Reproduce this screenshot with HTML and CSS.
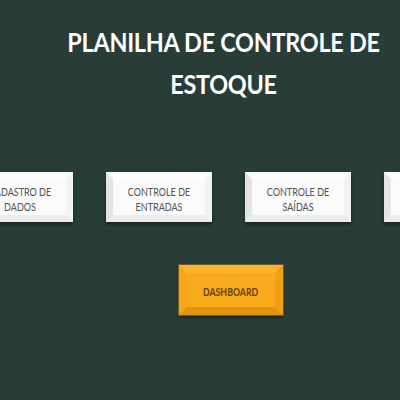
FILE: index.html
```html
<!DOCTYPE html>
<html lang="pt-BR">
<head>
<meta charset="utf-8">
<title>Planilha de Controle de Estoque</title>
<link rel="stylesheet" href="styles.css">
</head>
<body>
<main class="page">
  <h1 class="title"><span class="title-text">PLANILHA DE CONTROLE DE<br>ESTOQUE</span></h1>
  <nav class="menu">
    <a class="btn"><span class="label">CADASTRO DE<br>DADOS</span></a>
    <a class="btn"><span class="label">CONTROLE DE<br>ENTRADAS</span></a>
    <a class="btn"><span class="label">CONTROLE DE<br>SAÍDAS</span></a>
    <a class="btn"><span class="label">RELATÓRIO<br>GERAL</span></a>
  </nav>
  <div class="dash-row">
    <a class="btn btn-dash"><span class="label">DASHBOARD</span></a>
  </div>
</main>
</body>
</html>
```
FILE: styles.css
```css
html, body {
  margin: 0;
  padding: 0;
  background: #283c38;
  overflow: hidden;
}
.page {
  width: 400px;
  height: 400px;
  font-family: Lato, "Open Sans", sans-serif;
}
.title {
  margin: 0;
  padding-top: 21px;
  padding-left: 46px;
  font-size: 26px;
  line-height: 42px;
  font-weight: 700;
  color: #ffffff;
  text-align: center;
  letter-spacing: -0.3px;
}
.title-text {
  display: inline-block;
  transform: scaleX(0.9);
}
.menu {
  display: flex;
  gap: 33px;
  margin-top: 67px;
  margin-left: -33px;
}
.btn {
  box-sizing: border-box;
  flex: none;
  width: 106px;
  height: 50px;
  display: flex;
  align-items: center;
  justify-content: center;
  text-align: center;
  font-size: 11px;
  line-height: 15px;
  color: #4f5552;
  background: #fbfbfb;
  border-style: solid;
  border-width: 7px;
  border-color: #fdfdfd #f3f3f3 #ececec #e4e4e4;
  box-shadow: 0 2px 3px rgba(0, 0, 0, 0.45);
}
.label {
  display: inline-block;
  transform: scaleX(0.82);
  padding-top: 3px;
  white-space: nowrap;
}
.dash-row {
  margin-top: 43px;
  margin-left: 179px;
}
.btn-dash {
  width: 104px;
  height: 50px;
  color: #5e440a;
  font-size: 11px;
  font-weight: 700;
  background: #f9a91c;
  border-width: 8px;
  border-color: #fbb42e #f0a015 #e3940f #f6a51d;
  outline: 1px solid #6e5a22;
  box-shadow: 0 2px 3px rgba(0, 0, 0, 0.5);
}
.btn-dash .label {
  transform: scaleX(0.8);
  padding-top: 2px;
}
```
